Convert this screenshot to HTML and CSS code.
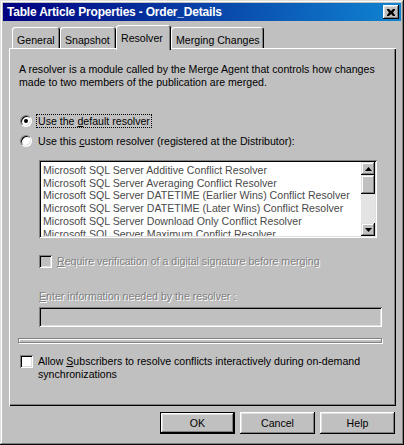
FILE: index.html
```html
<!DOCTYPE html>
<html>
<head>
<meta charset="utf-8">
<link rel="stylesheet" href="styles.css">
</head>
<body>
<div class="window">
  <div class="titlebar">
    <span class="title">Table Article Properties - Order_Details</span>
    <span class="close"><svg width="8" height="7" viewBox="0 0 8 7"><path d="M0 0h2l2 2 2-2h2v1L6 3.5 8 6v1H6L4 5 2 7H0V6l2-2.5L0 1z" fill="#000"/></svg></span>
  </div>
  <div class="content">
    <div class="tabs">
      <div class="tab t-general">General</div>
      <div class="tab t-snapshot">Snapshot</div>
      <div class="tab active t-resolver">Resolver</div>
      <div class="tab t-merging">Merging Changes</div>
    </div>
    <div class="panel">
      <p class="desc">A resolver is a module called by the Merge Agent that controls how changes<br>made to two members of the publication are merged.</p>
      <div class="radio first"><span class="rb checked"></span><span class="focus">Use the <u>d</u>efault resolver</span></div>
      <div class="radio"><span class="rb"></span><span>Use this <u>c</u>ustom resolver (registered at the Distributor):</span></div>
      <div class="listbox">
        <div class="items">
          <div>Microsoft SQL Server Additive Conflict Resolver</div>
          <div>Microsoft SQL Server Averaging Conflict Resolver</div>
          <div>Microsoft SQL Server DATETIME (Earlier Wins) Conflict Resolver</div>
          <div>Microsoft SQL Server DATETIME (Later Wins) Conflict Resolver</div>
          <div>Microsoft SQL Server Download Only Conflict Resolver</div>
          <div>Microsoft SQL Server Maximum Conflict Resolver</div>
        </div>
        <div class="scrollbar">
          <span class="sbtn"><svg width="7" height="4" viewBox="0 0 7 4"><path d="M3.5 0L7 4H0z" fill="#000"/></svg></span>
          <span class="thumb"></span>
          <span class="track"></span>
          <span class="sbtn"><svg width="7" height="4" viewBox="0 0 7 4"><path d="M0 0h7L3.5 4z" fill="#000"/></svg></span>
        </div>
      </div>
      <div class="check verify disabled"><span class="cb"></span><span class="dtext"><u>R</u>equire verification of a digital signature before merging</span></div>
      <div class="infolabel dtext"><u>E</u>nter information needed by the resolver :</div>
      <div class="field"></div>
      <div class="groupline"></div>
      <div class="check allow"><span class="cb white"></span><span>Allow <u>S</u>ubscribers to resolve conflicts interactively during on-demand<br>synchronizations</span></div>
    </div>
    <div class="buttons">
      <span class="btn default">OK</span>
      <span class="btn">Cancel</span>
      <span class="btn">Help</span>
    </div>
  </div>
</div>
</body>
</html>
```
FILE: styles.css
```css
* { box-sizing: border-box; }
body { margin: 0; background: #c0c0c0; font-family: "Liberation Sans", Arial, sans-serif; font-size: 10.6px; color: #000; }
.window {
  width: 404px; height: 445px; background: #c0c0c0; padding: 3px;
  box-shadow: inset -1px -1px #0a0a0a, inset 1px 1px #dfdfdf, inset -2px -2px #808080, inset 2px 2px #fff;
}
.titlebar {
  height: 18px; display: flex; align-items: center; justify-content: space-between;
  background: linear-gradient(to right, #000080, #1084d0); padding: 0 2px 0 4px;
}
.title { color: #fff; font-weight: bold; font-size: 12px; letter-spacing: -0.2px; }
.close {
  width: 16px; height: 14px; background: #c0c0c0; display: flex; align-items: center; justify-content: center;
  box-shadow: inset -1px -1px #000, inset 1px 1px #fff, inset -2px -2px #808080, inset 2px 2px #dfdfdf;
}
.content { padding: 4px 5px 0 6px; }
.tabs { display: flex; align-items: flex-end; height: 25px; margin-bottom: -2px; padding-left: 3px; position: relative; z-index: 1; }
.tab {
  height: 21px; margin-bottom: 2px; padding: 7px 0 0 5px; line-height: 13px; background: #c0c0c0;
  border-radius: 3px 3px 0 0; white-space: nowrap;
  box-shadow: inset 1px 1px #fff, inset -1px 0 #000, inset -2px 0 #808080;
}
.tab.active { height: 25px; margin-bottom: 0; padding-top: 7px; padding-left: 5px; }
.t-general { width: 48px; }
.t-snapshot { width: 56px; }
.t-resolver { width: 55px; }
.t-merging { width: 93px; }
.panel {
  height: 358px; padding: 15px 10px 0 10px;
  box-shadow: inset 1px 1px #fff, inset -1px -1px #000, inset -2px -2px #808080;
}
.desc { margin: 0; line-height: 13px; }
.radio { display: flex; align-items: center; height: 13px; margin-top: 7px; margin-left: 1px; }
.radio.first { margin-top: 25px; }
.rb {
  width: 12px; height: 12px; border-radius: 50%; background: #fff; margin-right: 6px; flex: none;
  border: 1px solid; border-color: #808080 #fff #fff #808080;
  box-shadow: inset 1px 1px #000, inset -1px -1px #dfdfdf; display: flex; align-items: center; justify-content: center;
}
.rb.checked::after { content: ""; width: 4px; height: 4px; border-radius: 50%; background: #000; }
.focus { outline: 1px dotted #000; outline-offset: 0; padding: 0 1px; margin-left: -1px; }
.listbox {
  display: flex; margin: 13px 0 0 20px; width: 338px; height: 78px; background: #fff; padding: 2px;
  box-shadow: inset 1px 1px #808080, inset -1px -1px #fff, inset 2px 2px #000, inset -2px -2px #dfdfdf;
}
.items { flex: 1; overflow: hidden; padding: 2px 0 0 2px; color: #4a4a4a; line-height: 12.7px; white-space: nowrap; }
.scrollbar { width: 14px; display: flex; flex-direction: column; }
.sbtn, .thumb {
  background: #c0c0c0; display: flex; align-items: center; justify-content: center;
  box-shadow: inset -1px -1px #000, inset 1px 1px #dfdfdf, inset -2px -2px #808080, inset 2px 2px #fff;
}
.sbtn { height: 13px; flex: none; }
.thumb { height: 19px; flex: none; }
.track { flex: 1; background: #e4e4e4; }
.check { display: flex; align-items: flex-start; }
.cb {
  width: 13px; height: 13px; flex: none; background: #c0c0c0; margin-right: 5px;
  box-shadow: inset 1px 1px #808080, inset -1px -1px #fff, inset 2px 2px #000, inset -2px -2px #dfdfdf;
}
.cb.white { background: #fff; }
.verify { margin: 17px 0 0 20px; line-height: 13px; }
.dtext { color: #808080; text-shadow: 1px 1px #fff; }
.infolabel { margin: 22px 0 0 20px; line-height: 13px; }
.field {
  margin: 4px 0 0 20px; width: 343px; height: 20px; background: #c0c0c0;
  box-shadow: inset 1px 1px #808080, inset -1px -1px #fff, inset 2px 2px #000, inset -2px -2px #dfdfdf;
}
.groupline {
  margin: 11px 0 0 -1px; width: 364px; height: 5px; border: 1px solid #808080;
  box-shadow: inset 1px 1px #fff, 1px 1px #fff;
}
.allow { margin: 12px 0 0 1px; line-height: 12.5px; }
.buttons { display: flex; justify-content: flex-end; gap: 5px; margin-top: 6px; padding-right: 1px; }
.btn {
  width: 75px; height: 22px; display: flex; align-items: center; justify-content: center; background: #c0c0c0;
  box-shadow: inset -1px -1px #000, inset 1px 1px #fff, inset -2px -2px #808080, inset 2px 2px #dfdfdf;
}
.btn.default {
  box-shadow: inset 0 0 0 1px #000, inset -2px -2px #000, inset 2px 2px #fff, inset -3px -3px #808080, inset 3px 3px #dfdfdf;
}
```
